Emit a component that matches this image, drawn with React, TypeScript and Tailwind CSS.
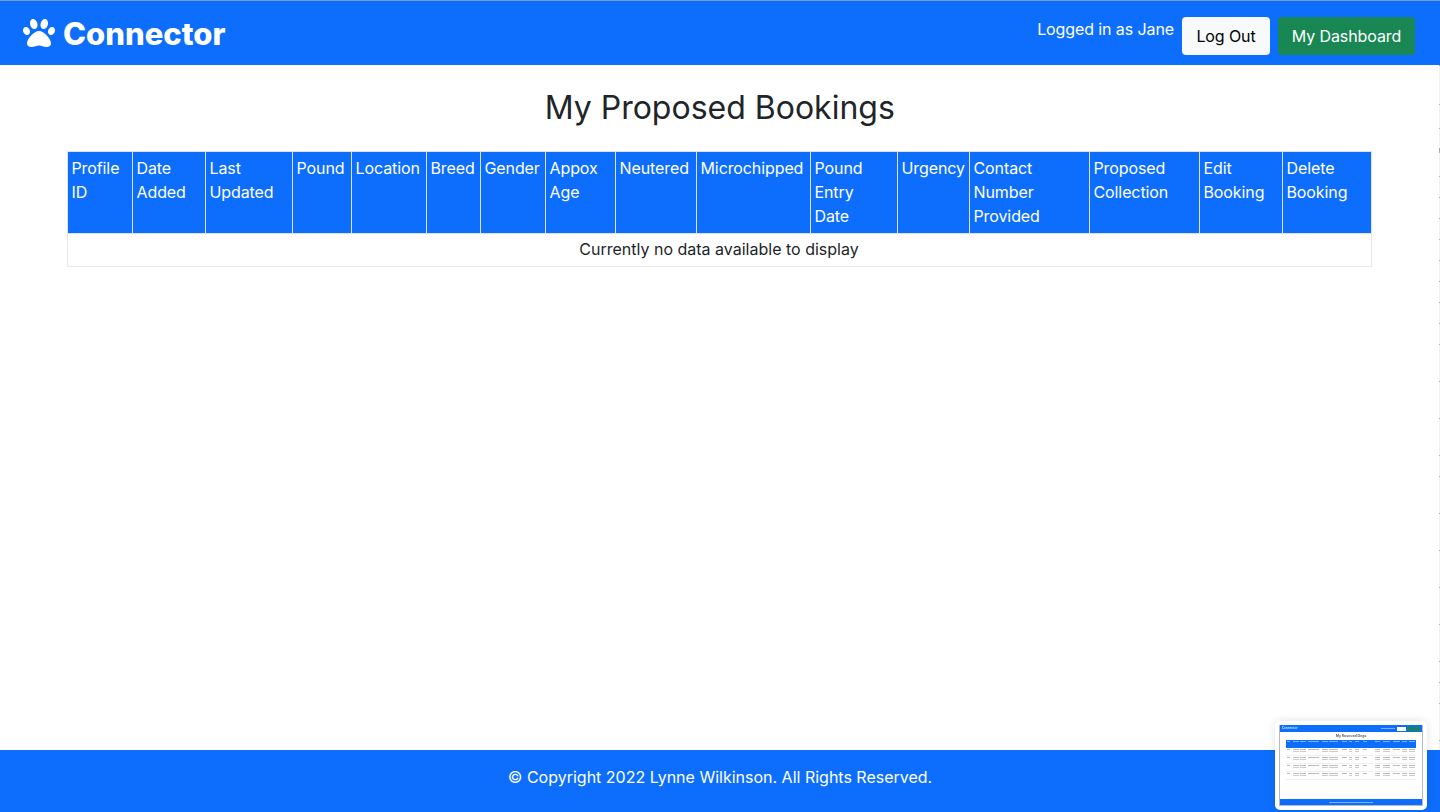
import { FaPaw } from "react-icons/fa";

const columns = [
  { title: ["Profile", "ID"], width: "w-[65px]" },
  { title: ["Date", "Added"], width: "w-[73px]" },
  { title: ["Last", "Updated"], width: "w-[87px]" },
  { title: ["Pound"], width: "w-[59px]" },
  { title: ["Location"], width: "w-[75px]" },
  { title: ["Breed"], width: "w-[54px]" },
  { title: ["Gender"], width: "w-[65px]" },
  { title: ["Appox", "Age"], width: "w-[70px]" },
  { title: ["Neutered"], width: "w-[81px]" },
  { title: ["Microchipped"], width: "w-[114px]" },
  { title: ["Pound", "Entry", "Date"], width: "w-[87px]" },
  { title: ["Urgency"], width: "w-[72px]" },
  { title: ["Contact", "Number", "Provided"], width: "w-[120px]" },
  { title: ["Proposed", "Collection"], width: "w-[110px]" },
  { title: ["Edit", "Booking"], width: "w-[83px]" },
  { title: ["Delete", "Booking"], width: "w-[89px]" },
];

const thumbCols = [
  { cell: "w-[6px]", line: "w-[3px]" },
  { cell: "w-[7px]", line: "w-[6px]" },
  { cell: "w-[8px]", line: "w-[6px]" },
  { cell: "w-[14px]", line: "w-[11px]" },
  { cell: "w-[7px]", line: "w-[6px]" },
  { cell: "w-[13px]", line: "w-[9px]" },
  { cell: "w-[7px]", line: "w-[5px]" },
  { cell: "w-[6px]", line: "w-[3px]" },
  { cell: "w-[8px]", line: "w-[4px]" },
  { cell: "w-[12px]", line: "w-[4px]" },
  { cell: "w-[8px]", line: "w-[5px]" },
  { cell: "w-[10px]", line: "w-[7px]" },
  { cell: "w-[9px]", line: "w-[7px]" },
  { cell: "w-[7px]", line: "w-[5px]" },
  { cell: "w-[8px]", line: "w-[6px]" },
];
const thumbRows = [0, 1, 2, 3];
const scrollTicks = [65, 104, 128, 176, 197, 218, 239, 260, 281, 302, 323, 344, 381, 418, 455, 476, 513, 550, 587, 624, 661, 682, 703, 740];

const Thumbnail = () => {
  return (
    <div className="absolute left-[1275px] top-[721px] w-[152px] h-[89px] bg-white rounded-[5px] shadow-[0_0_8px_rgba(0,0,0,0.12)] pt-[4px] px-[4px] pb-[4px]">
      <div className="w-full h-full flex flex-col border-x border-b border-[#b5b9c0] bg-white">
        <div className="h-[7px] shrink-0 bg-[#0d6efd] flex items-center justify-between px-[2px]">
          <span className="text-[3px] leading-none font-bold text-[#cfe0ff] blur-[0.3px]">Connector</span>
          <div className="flex items-center gap-[1px]">
            <span className="w-[14px] h-[1px] bg-[#7fb0ff] mr-[1px]"></span>
            <span className="w-[9px] h-[4px] bg-white"></span>
            <span className="w-[13px] h-[4px] bg-[#198754]"></span>
          </div>
        </div>
        <p className="h-[8px] shrink-0 text-[3.5px] leading-[8px] text-center font-bold text-[#666] blur-[0.3px]">My Rescued Dogs</p>
        <div className="mx-[6px] h-[8px] shrink-0 bg-[#0d6efd] flex justify-between pt-[1px]">
          {thumbCols.map((col, i) => (
            <span key={i} className={`${col.cell} flex flex-col gap-[1px] pl-[1px]`}>
              <span className={`${col.line} h-[1px] bg-[#7fb0ff]`}></span>
            </span>
          ))}
        </div>
        <div className="mx-[6px] flex flex-col">
          {thumbRows.map((row) => (
            <div key={row} className="h-[8px] border-b border-[#efefef] flex justify-between pt-[1px]">
              {thumbCols.map((col, i) => (
                <span key={i} className={`${col.cell} flex flex-col gap-[1px] pl-[1px]`}>
                  <span className={`${col.line} h-[1px] bg-[#bbb]`}></span>
                  {i % 3 !== 0 && <span className={`${col.line} h-[1px] bg-[#ccc]`}></span>}
                </span>
              ))}
            </div>
          ))}
        </div>
        <div className="mt-auto h-[6px] shrink-0 bg-[#0d6efd] flex items-center justify-center">
          <span className="w-[44px] h-[1px] bg-[#7fb0ff]"></span>
        </div>
      </div>
    </div>
  );
};

const App = () => {
  return (
    <div className="relative h-[812px] flex flex-col bg-white font-['Inter',sans-serif] text-[16px] text-[#212529] overflow-hidden">
      <header className="h-[65px] shrink-0 bg-[#0d6efd] border-t border-[#6f9fc9] flex items-center justify-between pl-[23px] pr-[25px]">
        <div className="flex items-center gap-[8px] text-white">
          <FaPaw className="text-[32px]" />
          <span className="font-extrabold text-[31px] leading-none">Connector</span>
        </div>
        <div className="flex items-center pt-[6px]">
          <span className="text-white mb-[15px] mr-[8px] tracking-[-0.1px]">Logged in as Jane</span>
          <button className="h-[38px] w-[88px] rounded-[4px] bg-[#f8f9fa] text-[#000] tracking-[-0.1px]">Log Out</button>
          <button className="h-[38px] w-[137px] ml-[8px] rounded-[4px] bg-[#198754] text-white tracking-[-0.1px]">My Dashboard</button>
        </div>
      </header>

      <main className="flex-1 pl-[66.5px]">
        <h1 className="text-[32px] leading-[38px] text-center mt-[24px] mb-[24px] pr-[67px]">My Proposed Bookings</h1>
        <table className="w-[1304px] table-fixed border-collapse">
          <thead>
            <tr className="bg-[#0d6efd] text-white">
              {columns.map((col) => (
                <th key={col.title.join(" ")} className={`${col.width} align-top text-left font-normal leading-[24px] pt-[4px] px-[4px] pb-[5px] border border-[#dee2e6] tracking-[-0.1px] whitespace-nowrap overflow-hidden`}>
                  {col.title.map((line) => (
                    <div key={line}>{line}</div>
                  ))}
                </th>
              ))}
            </tr>
          </thead>
          <tbody>
            <tr>
              <td colSpan={16} className="text-center leading-[24px] pt-[3px] px-[4px] pb-[5px] border border-[#e6e8ea]">
                Currently no data available to display
              </td>
            </tr>
          </tbody>
        </table>
      </main>

      <footer className="h-[62px] shrink-0 bg-[#0d6efd] flex items-center justify-center pb-[8px] text-white">
        © Copyright 2022 Lynne Wilkinson. All Rights Reserved.
      </footer>

      <Thumbnail />

      {/* thin strip down the right edge of the capture */}
      <span className="absolute right-0 top-[65px] h-[685px] w-[1px] bg-[#f2f2f2]"></span>
      <span className="absolute right-0 top-[148px] h-[5px] w-[1px] bg-[#aaa]"></span>
      {scrollTicks.map((top) => (
        <span key={top} style={{ top }} className="absolute right-0 w-[1px] h-[1px] bg-[#aaa]"></span>
      ))}
    </div>
  );
};

export default App;
